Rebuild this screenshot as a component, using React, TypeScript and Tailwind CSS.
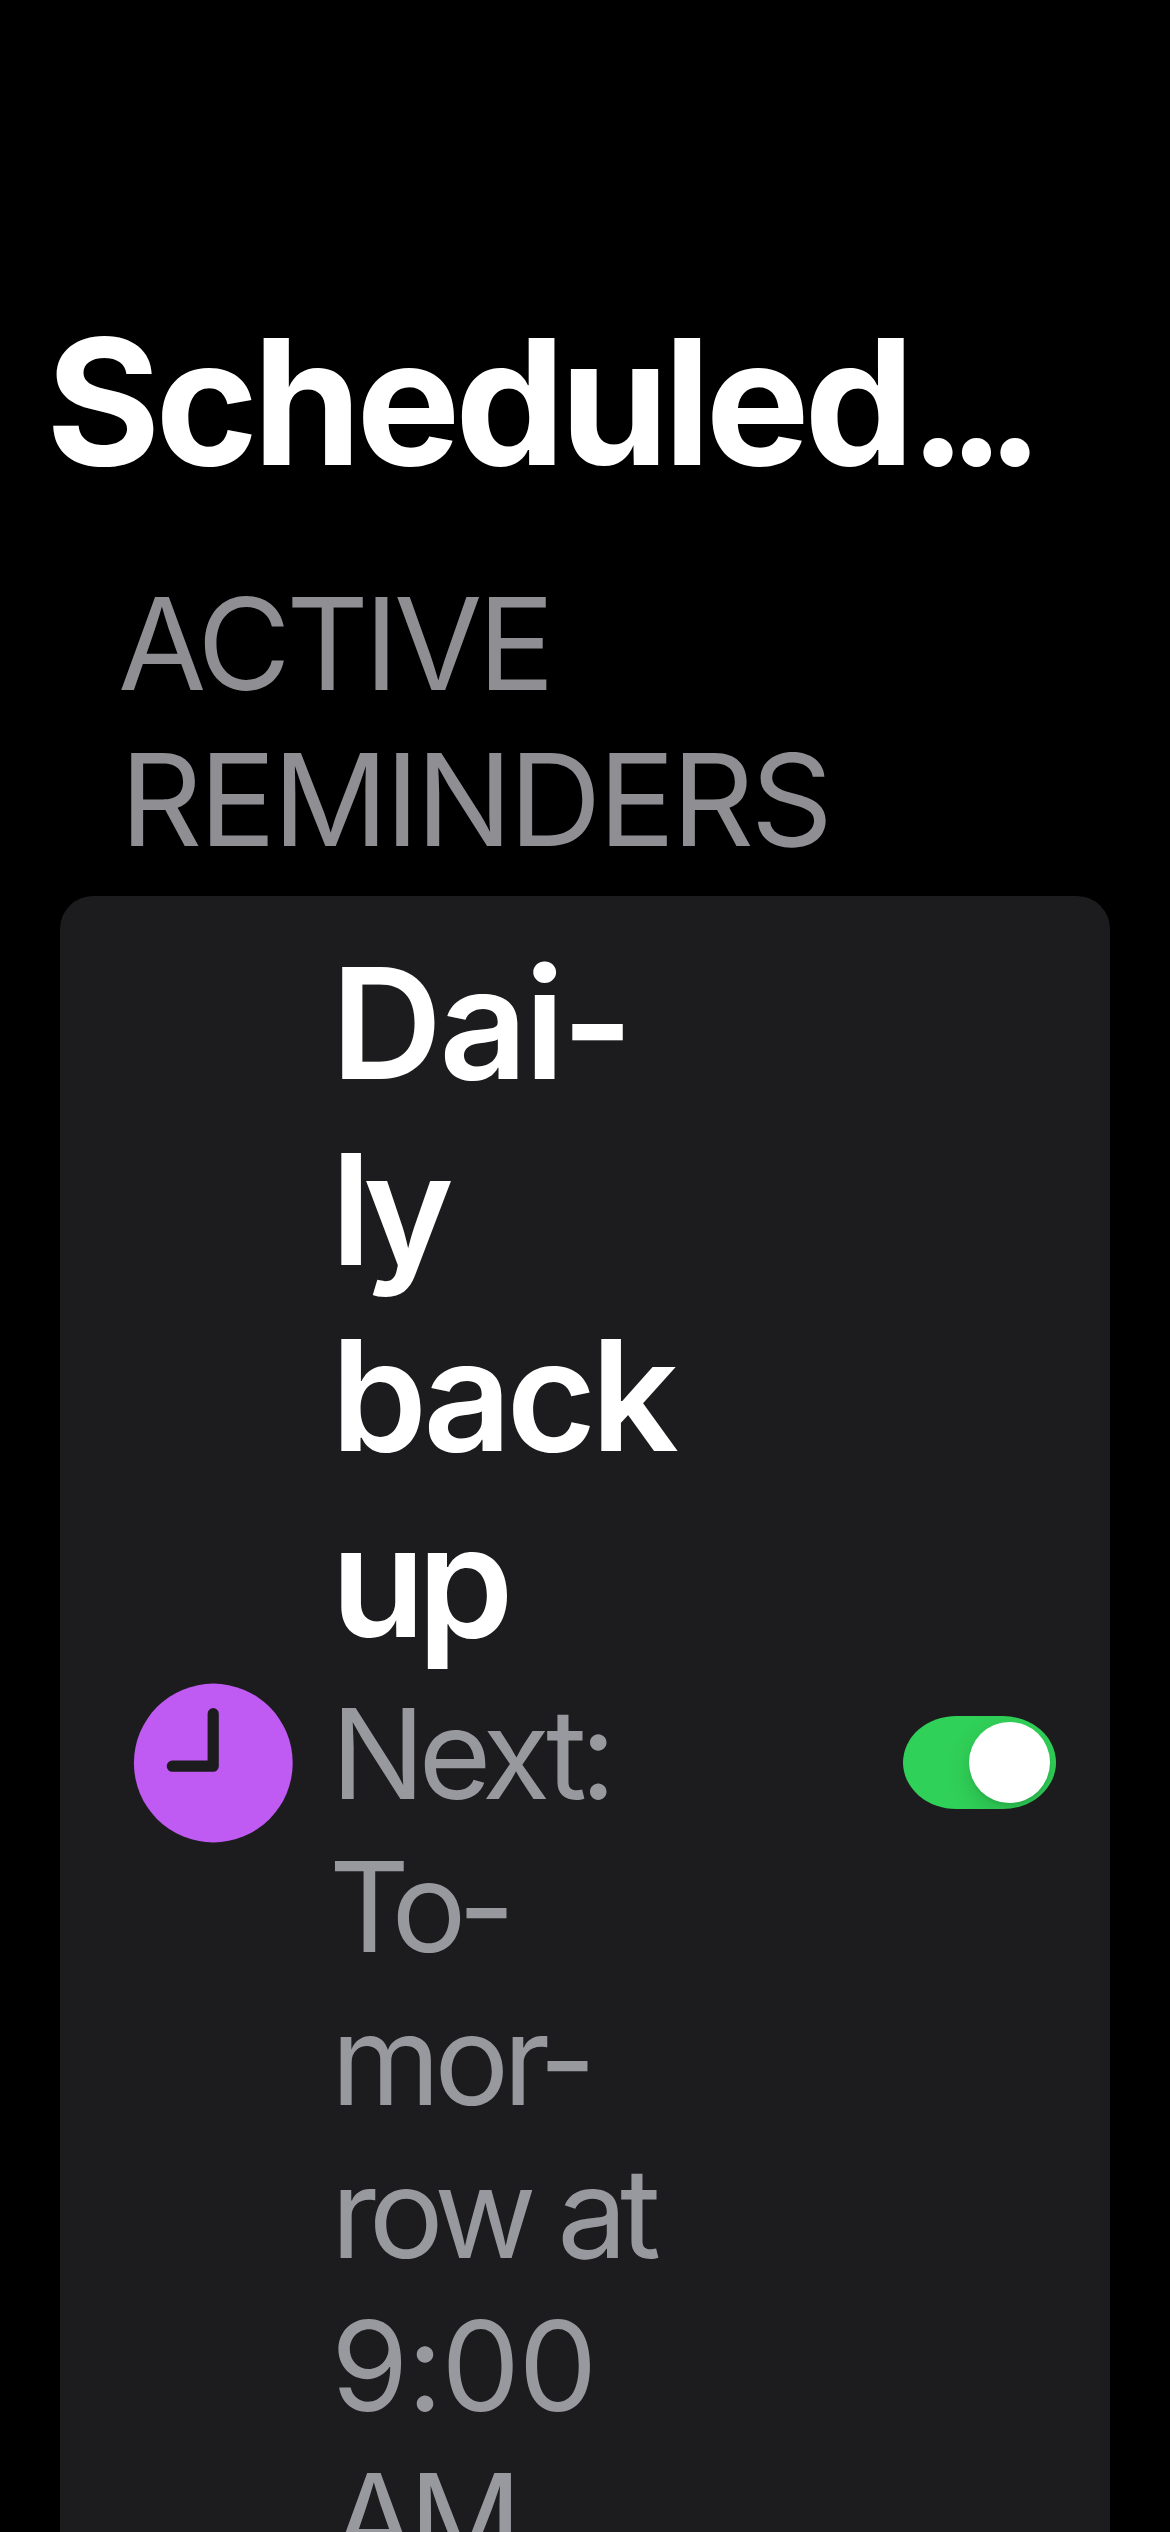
function ClockIcon() {
  return (
    <svg viewBox="0 0 160 160" className="h-[160px] w-[160px] shrink-0" aria-hidden="true">
      <circle cx="80.3" cy="80" r="79.4" fill="#bf5af2" />
      <path d="M80.2 30.7V83.2H39.3" fill="none" stroke="#1c1c1e" strokeWidth="11.2" strokeLinecap="round" strokeLinejoin="round" />
    </svg>
  );
}

function Toggle() {
  return (
    <button
      role="switch"
      aria-checked="true"
      aria-label="Daily backup"
      className="flex h-[93px] w-[153px] shrink-0 items-center justify-end overflow-hidden rounded-[54px/47px] bg-[#30d158] pr-1.5"
    >
      <span className="h-[81px] w-[81px] rounded-full bg-white shadow-[0_9px_24px_rgba(0,0,0,0.15),0_3px_3px_rgba(0,0,0,0.06)]" />
    </button>
  );
}

export default function App() {
  return (
    <main className="flex h-[2532px] w-[1170px] flex-col overflow-hidden bg-black font-['Inter',sans-serif]">
      <h1 className="mt-[299px] ml-[46px] h-[217px] shrink-0 text-[175px] leading-[204px] font-bold whitespace-nowrap text-white">
        <span className="tracking-[-0.031em]">Scheduled</span>
        <span className="text-[172px] tracking-[-0.11em]">...</span>
      </h1>
      <h2 className="mt-[50px] ml-[118px] shrink-0 text-[128px] leading-[156px] font-[430] text-[#8e8e93]">
        <span className="block tracking-[-0.036em]">ACTIVE</span>
        <span className="ml-[2px] block tracking-[-0.026em]">REMINDERS</span>
      </h2>
      <section className="mx-[60px] mt-[18px] flex h-[1733px] shrink-0 items-center rounded-[33px] bg-[#1c1c1e] pr-[54px] pl-[73px]">
        <ClockIcon />
        <div className="ml-[38px] flex-1 whitespace-nowrap">
          <p className="pb-[3px] text-[154px] leading-[186px] font-[630] text-white">
            <span className="block tracking-[-0.02em]">Dai-</span>
            <span className="block tracking-[-0.06em]">ly</span>
            <span className="block tracking-[-0.034em]">back</span>
            <span className="block tracking-[-0.05em]">up</span>
          </p>
          <p className="text-[125px] leading-[153px] font-[430] text-[#98989f]">
            <span className="block tracking-[-0.053em]">Next:</span>
            <span className="-ml-[2px] block tracking-[-0.068em]">To-</span>
            <span className="block tracking-[-0.05em]">mor-</span>
            <span className="block tracking-[-0.058em]">row at</span>
            <span className="block tracking-[-0.013em]">9:00</span>
            <span className="block tracking-[-0.065em]">AM</span>
          </p>
        </div>
        <Toggle />
      </section>
    </main>
  );
}
